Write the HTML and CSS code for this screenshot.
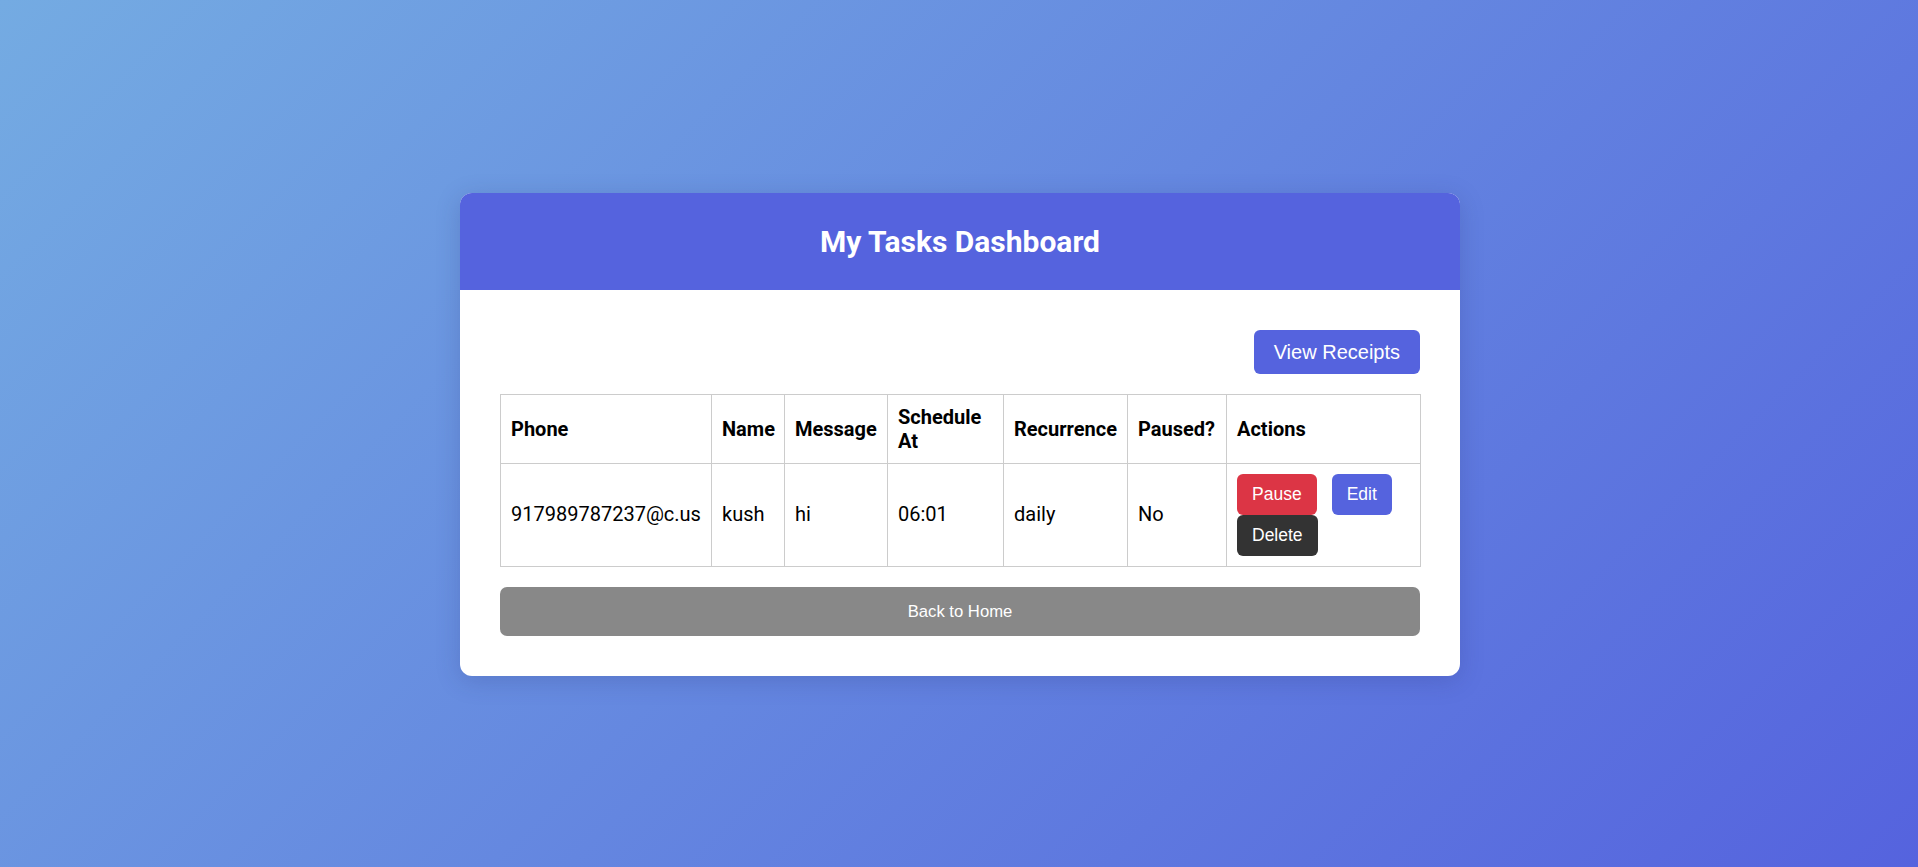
FILE: index.html
```html
<!DOCTYPE html>
<html lang="en">
<head>
<meta charset="utf-8">
<title>My Tasks Dashboard</title>
<link rel="stylesheet" href="styles.css">
</head>
<body>
  <div class="card">
    <header class="card-header">
      <h1>My Tasks Dashboard</h1>
    </header>
    <div class="card-body">
      <div class="toolbar">
        <button class="btn btn-primary btn-lg">View Receipts</button>
      </div>
      <table class="tasks">
        <colgroup>
          <col class="c-phone"><col class="c-name"><col class="c-msg"><col class="c-sched"><col class="c-rec"><col class="c-paused"><col class="c-actions">
        </colgroup>
        <thead>
          <tr>
            <th>Phone</th>
            <th>Name</th>
            <th>Message</th>
            <th>Schedule At</th>
            <th>Recurrence</th>
            <th>Paused?</th>
            <th>Actions</th>
          </tr>
        </thead>
        <tbody>
          <tr>
            <td>917989787237@c.us</td>
            <td>kush</td>
            <td>hi</td>
            <td>06:01</td>
            <td>daily</td>
            <td>No</td>
            <td>
              <div class="actions">
                <button class="btn btn-danger">Pause</button>
                <button class="btn btn-primary">Edit</button>
                <button class="btn btn-dark">Delete</button>
              </div>
            </td>
          </tr>
        </tbody>
      </table>
      <button class="btn-back">Back to Home</button>
    </div>
  </div>
</body>
</html>
```

FILE: styles.css
```css
* { box-sizing: border-box; }

html, body { height: 100%; }

body {
  margin: 0;
  min-height: 100vh;
  font-family: Roboto, "Liberation Sans", Arial, sans-serif;
  background: linear-gradient(135deg, #74abe2 0%, #5563de 100%);
  display: flex;
  align-items: center;
  justify-content: center;
}

.card {
  width: 1000px;
  margin-left: 2px;
  margin-top: 2px;
  background: #fff;
  border-radius: 12px;
  overflow: hidden;
  box-shadow: 0 5px 25px rgba(40, 50, 120, 0.22);
}

.card-header {
  background: #5563de;
  color: #fff;
  text-align: center;
  padding: 31px 20px;
}

.card-header h1 {
  margin: 0;
  font-size: 30px;
  font-weight: 700;
  line-height: 35px;
}

.card-body {
  padding: 40px;
}

.toolbar {
  display: flex;
  justify-content: flex-end;
  margin-bottom: 20px;
}

.btn {
  font-family: "Liberation Sans", Arial, sans-serif;
  font-size: 17.5px;
  line-height: 21px;
  color: #fff;
  border: none;
  border-radius: 6px;
  padding: 10px 15px;
  cursor: pointer;
}

.btn-lg {
  font-size: 20px;
  line-height: 24px;
  padding: 10px 20px;
}

.btn-primary { background: #5563de; }
.btn-danger { background: #dc3545; }
.btn-dark { background: #333; }

.tasks {
  width: 920px;
  border-collapse: collapse;
  table-layout: fixed;
  font-size: 20px;
  color: #000;
  margin-bottom: 20px;
}

.c-phone { width: 211px; }
.c-name { width: 73px; }
.c-msg { width: 103px; }
.c-sched { width: 116px; }
.c-rec { width: 124px; }
.c-paused { width: 99px; }
.c-actions { width: 194px; }

.tasks th,
.tasks td {
  border: 1px solid #ccc;
  padding: 10px;
  text-align: left;
  vertical-align: middle;
  line-height: 23.5px;
}

.tasks th {
  font-weight: 700;
  padding-top: 11px;
  padding-bottom: 10px;
}

.actions {
  display: flex;
  flex-wrap: wrap;
  column-gap: 15px;
  row-gap: 0;
  align-items: flex-start;
}

.btn-back {
  display: block;
  width: 100%;
  background: #888;
  color: #fff;
  border: none;
  border-radius: 7px;
  font-family: "Liberation Sans", Arial, sans-serif;
  font-size: 16.67px;
  line-height: 19px;
  padding: 15px;
  cursor: pointer;
}
```
